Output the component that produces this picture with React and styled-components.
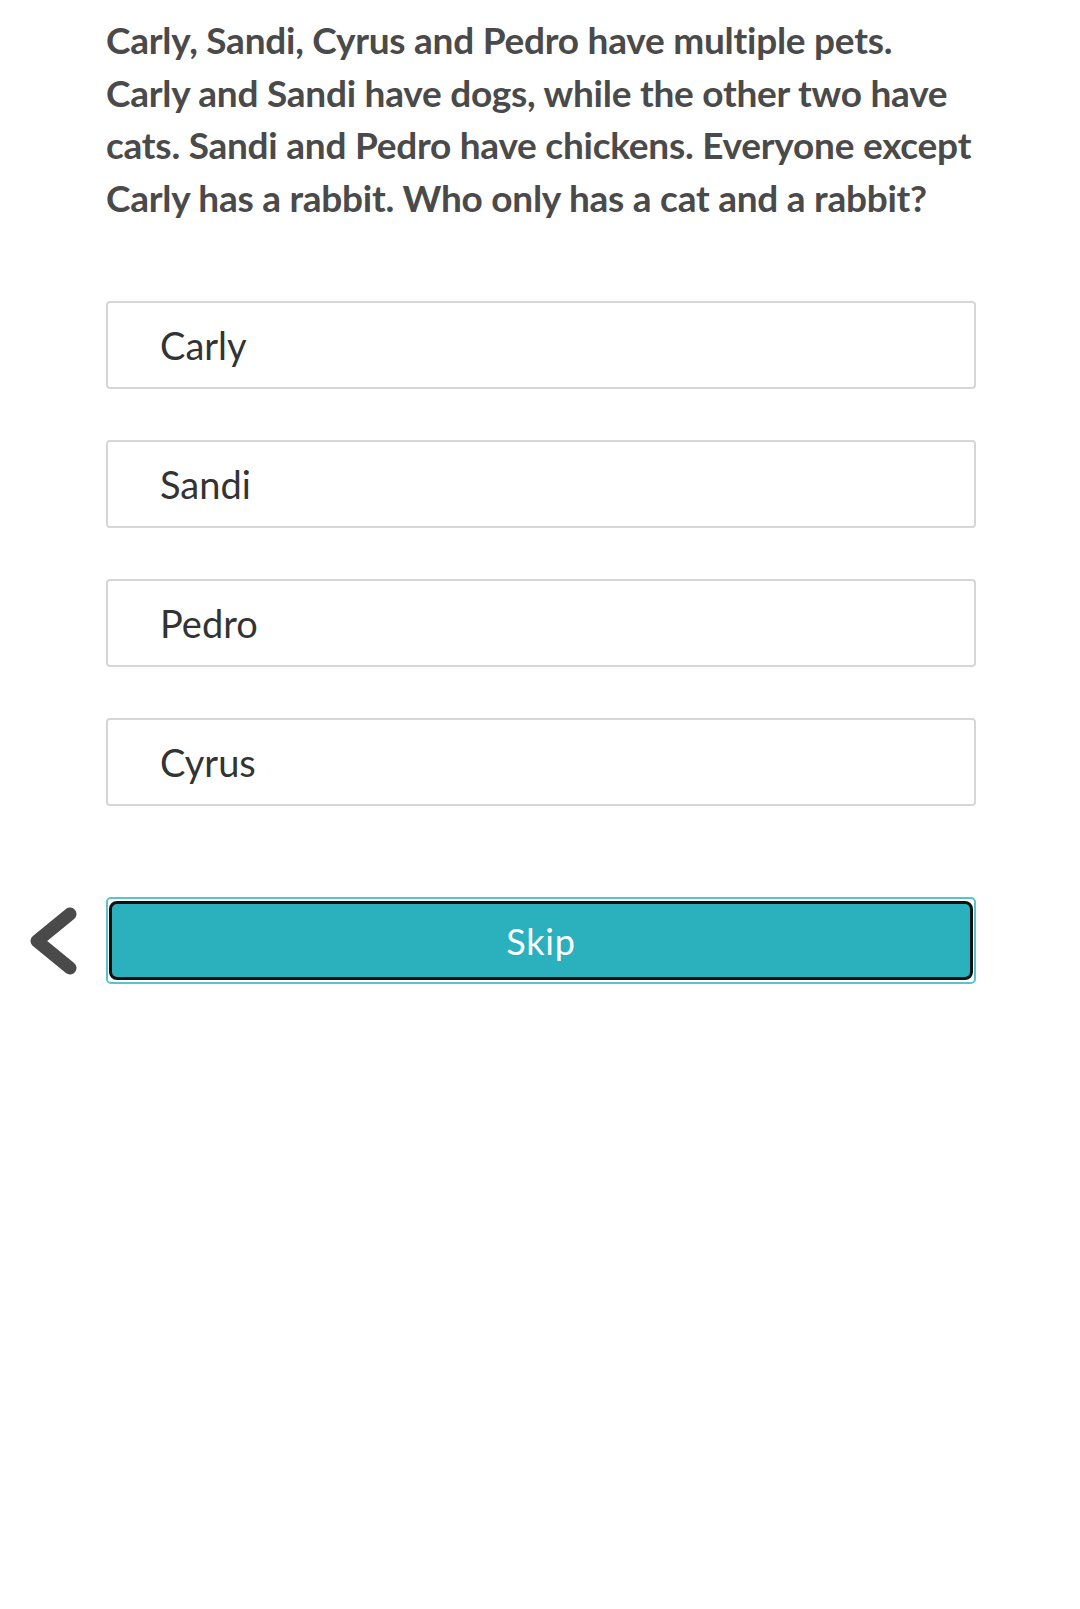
import React from 'react'
import styled, { createGlobalStyle } from 'styled-components'

const GlobalStyle = createGlobalStyle`
    html, body {
        margin: 0;
        padding: 0;
        background: #fff;
    }
    body {
        font-family: Lato, "Open Sans", sans-serif;
    }
`

const Page = styled.div`
    display: grid;
    grid-template-columns: 106px 870px;
    padding-top: 14px;
`

const Question = styled.p`
    grid-column: 2;
    margin: 0 -8px 0 0;
    font-weight: 700;
    font-size: 37px;
    line-height: 52.5px;
    color: #4a4a4a;
    letter-spacing: -0.25px;
`

const Options = styled.div`
    grid-column: 2;
    display: flex;
    flex-direction: column;
    gap: 51px;
    margin-top: 77px;
`

const Option = styled.button`
    display: flex;
    align-items: center;
    height: 88px;
    padding: 0 0 0 52px;
    box-sizing: border-box;
    background: #fff;
    border: 2px solid #d6d6d6;
    border-radius: 4px;
    font-family: Lato, sans-serif;
    font-size: 38px;
    color: #333;
    text-align: left;
    cursor: pointer;
`

const Back = styled.button`
    grid-column: 1;
    justify-self: center;
    align-self: center;
    margin-top: 91px;
    width: 50px;
    height: 72px;
    padding: 0;
    border: none;
    background: none;
    cursor: pointer;
`

const SkipFrame = styled.div`
    grid-column: 2;
    margin-top: 91px;
    border: 2px solid #58c3cb;
    border-radius: 5px;
    padding: 2px 1px;
    height: 87px;
    box-sizing: border-box;
    display: flex;
`

const Skip = styled.button`
    flex: 1;
    background: #2bb0be;
    border: 3.5px solid #111;
    border-radius: 8px;
    color: #fff;
    font-family: Lato, sans-serif;
    font-size: 36px;
    letter-spacing: 0.8px;
    cursor: pointer;
`

const Chevron = () => (
    <svg width="50" height="72" viewBox="0 0 50 72">
        <path d="M42 9 L9 36 L42 63" fill="none" stroke="#4a4a4a" strokeWidth="13" strokeLinecap="round" strokeLinejoin="round" />
    </svg>
)

const answers = ['Carly', 'Sandi', 'Pedro', 'Cyrus']

const App = () => {
    return (
        <>
            <GlobalStyle />
            <Page>
                <Question>
                    Carly, Sandi, Cyrus and Pedro have multiple pets. Carly and Sandi have dogs, while the other two have cats. Sandi and Pedro have chickens. Everyone except Carly has a rabbit. Who only has a cat and a rabbit?
                </Question>
                <Options>
                    {answers.map(a => <Option key={a}>{a}</Option>)}
                </Options>
                <Back aria-label="Back"><Chevron /></Back>
                <SkipFrame>
                    <Skip>Skip</Skip>
                </SkipFrame>
            </Page>
        </>
    )
}

export default App
